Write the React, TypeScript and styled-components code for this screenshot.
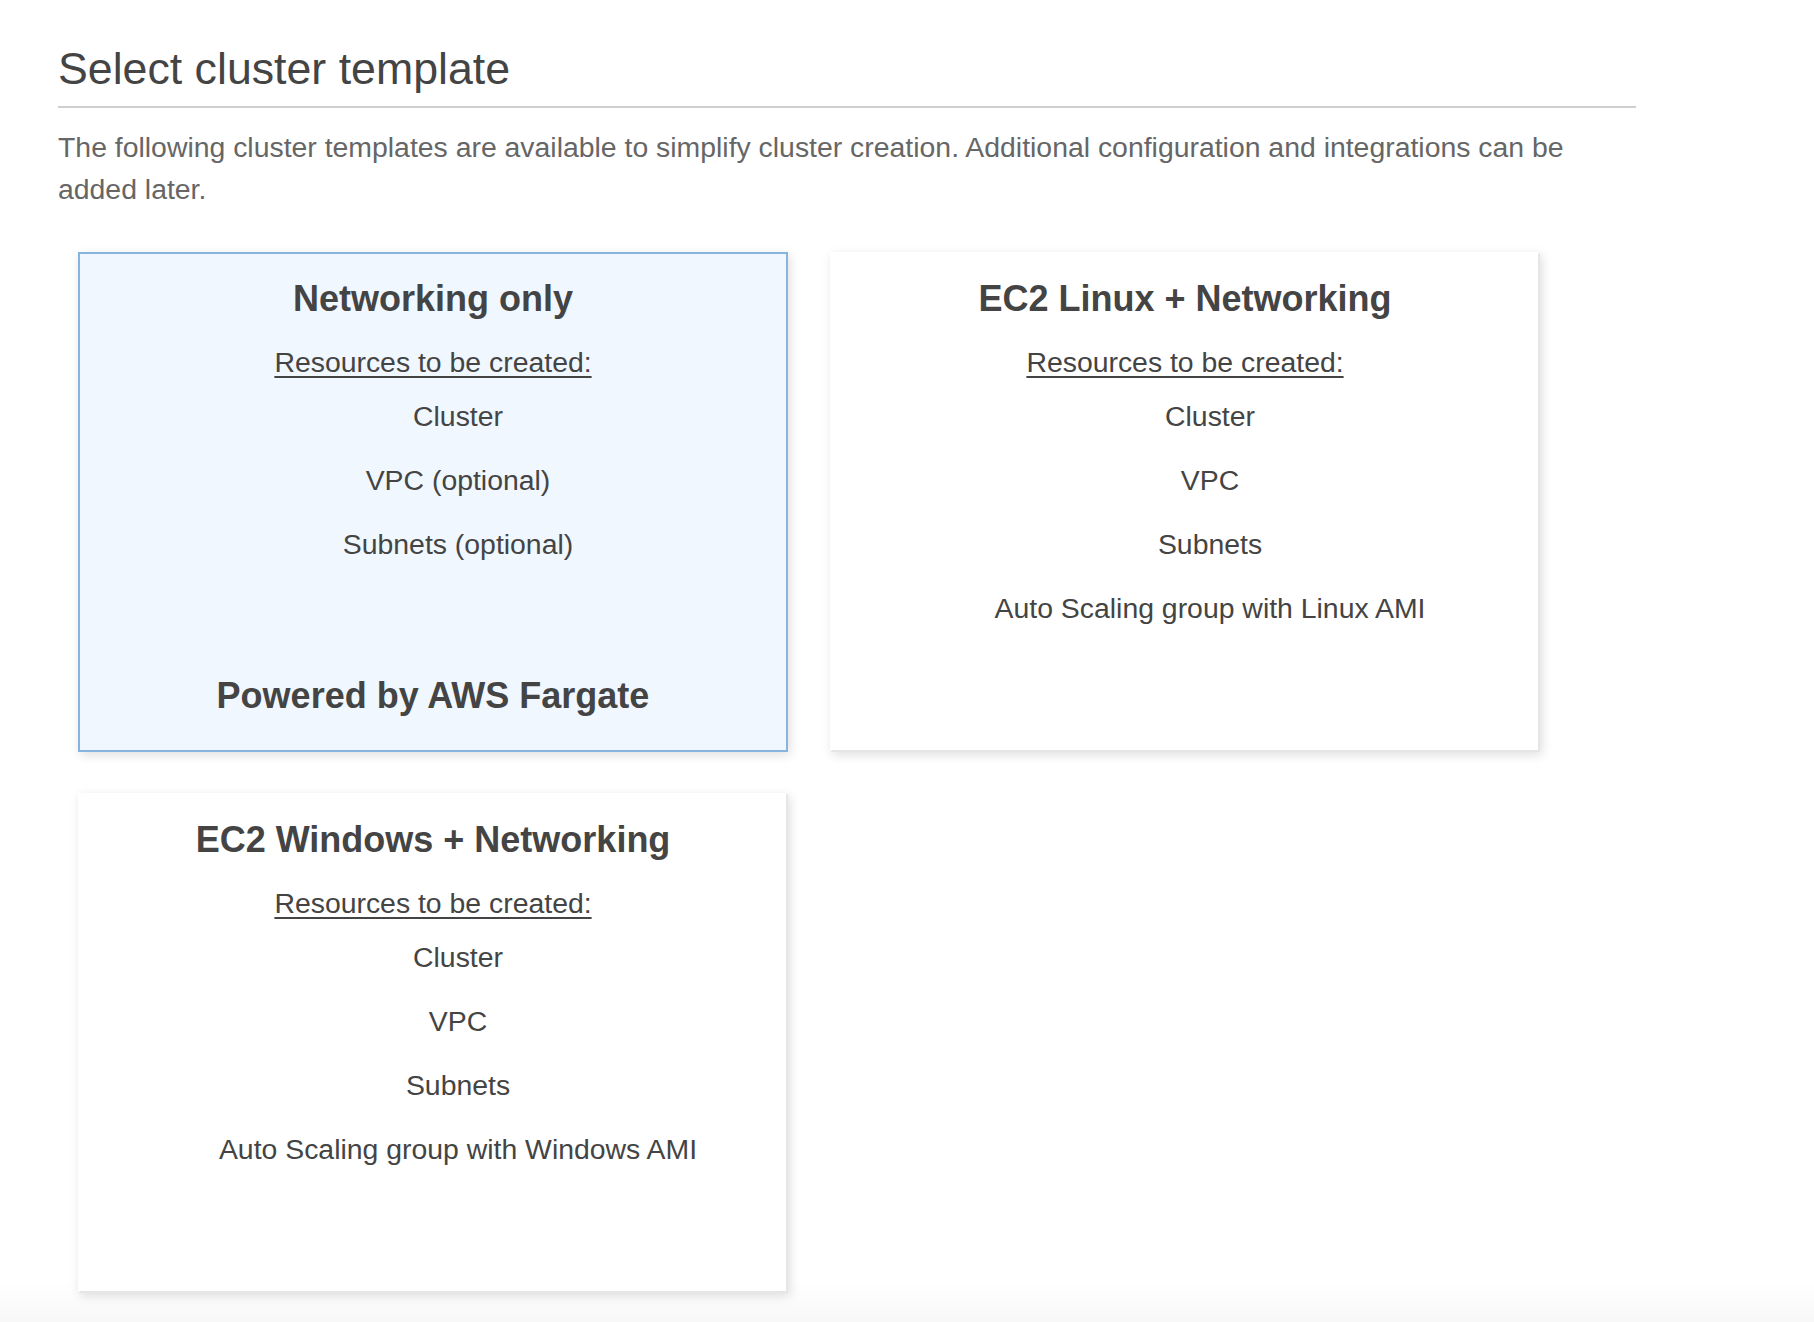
import * as React from "react";
import styled, { createGlobalStyle } from "styled-components";

const GlobalStyle = createGlobalStyle`
  html, body {
    margin: 0;
    padding: 0;
  }
  body {
    min-height: 1322px;
    background: linear-gradient(to bottom, #ffffff 0, #ffffff 1280px, #f8f8f8 1322px);
    font-family: "Liberation Sans", Arial, Helvetica, sans-serif;
  }
`

const Page = styled.div`
  padding: 43px 0 40px 58px;
`

const Section = styled.section`
  width: 1578px;
`

const Title = styled.h1`
  margin: 0;
  padding-bottom: 11px;
  border-bottom: 2px solid #cfcfcf;
  font-size: 44.7px;
  line-height: 52px;
  font-weight: 400;
  color: #444;
`

const Intro = styled.p`
  margin: 19px 0 0 0;
  font-size: 28.4px;
  line-height: 41.6px;
  color: #666;
`

const Templates = styled.div`
  display: grid;
  grid-template-columns: repeat(2, 710px);
  column-gap: 42px;
  row-gap: 41px;
  margin: 42px 0 0 20px;
`

const Card = styled.div<{ $selected?: boolean }>`
  box-sizing: border-box;
  height: 500px;
  display: flex;
  flex-direction: column;
  padding: 23px 10px 32px;
  text-align: center;
  color: #444;
  cursor: pointer;
  background: ${(p) => (p.$selected ? "#f0f7fe" : "#fff")};
  border: 2px solid;
  border-color: ${(p) => (p.$selected ? "#86b4df" : "#fff #e6e6e6 #e6e6e6 #fff")};
  box-shadow: 2px 3px 10px rgba(0, 0, 0, 0.13);
`

const CardTitle = styled.h2`
  margin: 0;
  font-size: 36px;
  line-height: 44px;
  font-weight: 700;
`

const ResourcesLabel = styled.div`
  margin-top: 21px;
  font-size: 28.4px;
  line-height: 40px;
  text-decoration: underline;
  text-underline-offset: 4px;
`

const ResourceList = styled.ul`
  list-style: none;
  margin: 14px 0 0 0;
  padding: 0 0 0 50px;

  li {
    font-size: 28.4px;
    line-height: 40px;
    margin-bottom: 24px;
  }
`

const PoweredBy = styled.div`
  margin-top: auto;
  font-size: 36px;
  line-height: 44px;
  font-weight: 700;
`

type Template = {
  name: string;
  resources: string[];
  footer?: string;
}

const templates: Template[] = [
  {
    name: "Networking only",
    resources: ["Cluster", "VPC (optional)", "Subnets (optional)"],
    footer: "Powered by AWS Fargate",
  },
  {
    name: "EC2 Linux + Networking",
    resources: ["Cluster", "VPC", "Subnets", "Auto Scaling group with Linux AMI"],
  },
  {
    name: "EC2 Windows + Networking",
    resources: ["Cluster", "VPC", "Subnets", "Auto Scaling group with Windows AMI"],
  },
]

export default function App() {
  const [selected, setSelected] = React.useState(0)
  return (
    <>
      <GlobalStyle />
      <Page>
        <Section>
          <Title>Select cluster template</Title>
          <Intro>
            The following cluster templates are available to simplify cluster creation. Additional
            configuration and integrations can be added later.
          </Intro>
          <Templates>
            {templates.map((t, i) => (
              <Card key={t.name} $selected={i === selected} onClick={() => setSelected(i)}>
                <CardTitle>{t.name}</CardTitle>
                <ResourcesLabel>Resources to be created:</ResourcesLabel>
                <ResourceList>
                  {t.resources.map((r) => (
                    <li key={r}>{r}</li>
                  ))}
                </ResourceList>
                {t.footer && <PoweredBy>{t.footer}</PoweredBy>}
              </Card>
            ))}
          </Templates>
        </Section>
      </Page>
    </>
  )
}
